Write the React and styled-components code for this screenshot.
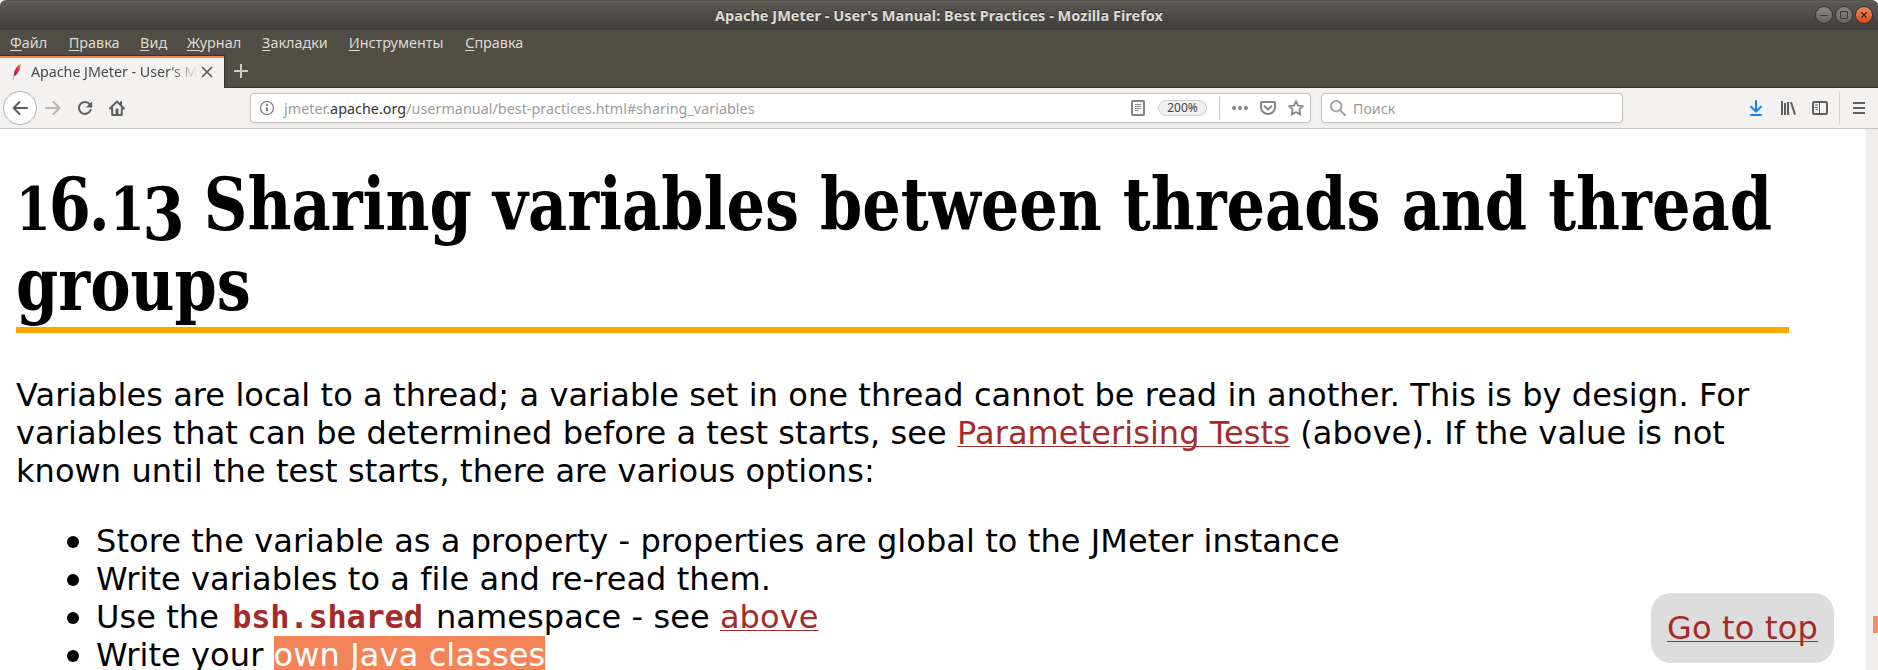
import React from "react";
import styled, { createGlobalStyle } from "styled-components";

const UI = `"Noto Sans", "Open Sans", sans-serif`;

const GlobalStyle = createGlobalStyle`
  body { margin: 0; background: #fff; overflow: hidden; }
  *, *::before, *::after { box-sizing: border-box; }
`;

const Window = styled.div`
  display: flex;
  flex-direction: column;
  width: 1878px;
  height: 670px;
  overflow: hidden;
  font-family: ${UI};
`;

const TitleBar = styled.header`
  position: relative;
  flex: none;
  display: flex;
  align-items: center;
  justify-content: center;
  height: 30px;
  padding-bottom: 2px;
  border-radius: 6px 6px 0 0;
  border-top: 1px solid #55534b;
  background: linear-gradient(#65635a 0, #5a5850 2px, #3d3c37 100%);
`;

const WindowTitle = styled.span`
  color: #dfdbd2;
  font-size: 14.5px;
  font-weight: 700;
  line-height: 20px;
  letter-spacing: 0.02px;
  text-shadow: 0 -1px 0 #2c2b28;
`;

const WindowButtons = styled.div`
  position: absolute;
  right: 5px;
  top: 5px;
  display: flex;
  gap: 2px;
`;

const WindowButton = styled.span`
  display: flex;
  width: 18px;
  height: 18px;
  border-radius: 50%;
  border: 1px solid #35342f;
  background: ${(p) =>
    p.$close ? "linear-gradient(#f58a63, #df4a16)" : "linear-gradient(#8a8880, #66645c)"};
`;

const MenuBar = styled.nav`
  flex: none;
  display: flex;
  gap: 20.8px;
  height: 25px;
  padding: 3px 0 0 10px;
  background: #504d45;
`;

const MenuItem = styled.span`
  width: ${(p) => p.$width}px;
  color: #dfdbd2;
  font-size: 14.4px;
  line-height: 20px;
  white-space: nowrap;

  &::first-letter {
    text-decoration: underline;
    text-decoration-thickness: 1px;
    text-underline-offset: 2px;
  }
`;

const TabStrip = styled.div`
  flex: none;
  display: flex;
  height: 33px;
  background: #504d45;
`;

const Tab = styled.div`
  display: flex;
  align-items: center;
  width: 225px;
  padding: 0 11px 0 11px;
  border-top: 1px solid #35332e;
  border-right: 1px solid #35332e;
  background: linear-gradient(#f38458 2px, #f4f2f1 2px);
`;

const TabTitle = styled.span`
  flex: none;
  width: 166px;
  margin: 0 3px 0 8px;
  overflow: hidden;
  white-space: nowrap;
  color: #4a4a4a;
  font-size: 14.3px;
  line-height: 22px;
  letter-spacing: -0.05px;
  mask-image: linear-gradient(to right, #000 138px, transparent 166px);
`;

const StripRest = styled.div`
  flex: 1;
  padding: 9px 0 0 9px;
  border-bottom: 1px solid #35332e;
`;

const Toolbar = styled.div`
  flex: none;
  display: flex;
  align-items: center;
  height: 41px;
  padding: 0 13px 0 3px;
  border-bottom: 1px solid #c8c5c3;
  background: #f4f2f1;
`;

const BackButton = styled.span`
  display: flex;
  align-items: center;
  justify-content: center;
  width: 34px;
  height: 34px;
  border: 1px solid #b0aeac;
  border-radius: 50%;
  background: #fff;
`;

const NavIcons = styled.div`
  display: flex;
  gap: 16px;
  width: 213px;
  padding-left: 8px;
`;

const Field = styled.div`
  display: flex;
  align-items: center;
  width: ${(p) => p.$width}px;
  height: 30px;
  margin-right: ${(p) => p.$after}px;
  padding: 0 6px 0 ${(p) => p.$inset}px;
  border: 1px solid #c6c2be;
  border-radius: 4px;
  background: #fff;
  box-shadow: 0 1px 3px rgba(0, 0, 0, 0.06);
`;

const Address = styled.span`
  flex: 1;
  margin-left: 9px;
  color: #9c9c9c;
  font-size: 14.3px;
  line-height: 20px;
  letter-spacing: 0.045px;
  padding-top: 1px;
  white-space: nowrap;
`;

const Host = styled.span`
  color: #333;
`;

const ZoomPill = styled.span`
  width: 49px;
  height: 16px;
  margin: 0 12px;
  border: 1px solid #cfcfcf;
  border-radius: 8px;
  background: #f0f0f0;
  color: #444;
  font-size: 12px;
  line-height: 14px;
  text-align: center;
`;

const Divider = styled.span`
  width: 1px;
  height: ${(p) => p.$height}px;
  margin: 0 ${(p) => p.$after}px 0 ${(p) => p.$before}px;
  background: ${(p) => p.$color};
`;

const FieldIcons = styled.span`
  display: flex;
  gap: 12px;
`;

const Placeholder = styled.span`
  margin-left: 7px;
  padding-top: 1px;
  color: #999;
  font-size: 14.2px;
  line-height: 20px;
`;

const ToolIcons = styled.div`
  display: flex;
  gap: 16px;
  margin-left: auto;
`;

const Icon = styled.svg`
  flex: none;
  display: block;
  fill: none;
  stroke: ${(p) => p.$color || "#5f5f5f"};
  stroke-width: ${(p) => p.$weight || 2};
  stroke-linecap: ${(p) => p.$cap || "round"};
  stroke-linejoin: round;
`;

const Viewport = styled.div`
  position: relative;
  flex: 1;
  display: flex;
  min-height: 0;
  background: #fff;
`;

const Page = styled.main`
  flex: 1;
  min-width: 0;
  padding: 35px 77px 0 16px;
  color: #000;
  font-family: "DejaVu Sans", sans-serif;
  font-size: 32px;
  line-height: 38px;
  letter-spacing: 0.075px;
`;

const Heading = styled.h1`
  height: 169px;
  margin: 0 0 43px;
  border-bottom: 6px solid #ffa500;
  font-family: "DejaVu Serif Condensed", "DejaVu Serif", serif;
  font-stretch: condensed;
  font-size: 73px;
  font-weight: 700;
  line-height: 80px;
  letter-spacing: 0;
`;

const HeadingLine = styled.span`
  display: block;
  width: max-content;
  white-space: nowrap;
  transform: scaleX(0.921);
  transform-origin: left;
`;

const Digit = styled.span`
  font-size: ${(p) => (p.$short ? 60 : 73)}px;
  line-height: 0;
  letter-spacing: -2.1px;
  vertical-align: ${(p) => (p.$drop ? -10 : 0)}px;
`;

const Paragraph = styled.p`
  margin: 0;
  white-space: nowrap;
`;

const Link = styled.a`
  color: #a52a2a;
  text-decoration: underline;
  text-decoration-thickness: 1px;
  text-underline-offset: 2px;
  text-decoration-skip-ink: none;
`;

const List = styled.ul`
  margin: 32px 0 0;
  padding: 0;
  list-style: none;
`;

const Item = styled.li`
  display: flex;
  align-items: center;
  height: 38px;
  white-space: pre;

  &::before {
    content: "";
    width: 12px;
    height: 12px;
    margin: 2px 17px 0 51px;
    border-radius: 50%;
    background: #000;
  }
`;

const Code = styled.code`
  margin: 0 3px;
  color: #a52a2a;
  font-family: "DejaVu Sans Mono", monospace;
  font-size: 32px;
  font-weight: 700;
  letter-spacing: -0.22px;
`;

const Selected = styled.span`
  background: #f38458;
  color: #fff;
  letter-spacing: 0.12px;
`;

const GoTop = styled.div`
  position: absolute;
  right: 44px;
  top: 464px;
  display: flex;
  align-items: center;
  justify-content: center;
  width: 183px;
  height: 70px;
  border-radius: 20px;
  background: #ddd;
  font-family: "DejaVu Sans", sans-serif;
  font-size: 32px;
  line-height: 38px;
  letter-spacing: 0.2px;
`;

const Scrollbar = styled.div`
  width: 12px;
  padding: 487px 0 0 7px;
  background: #f1efee;
`;

const ScrollMark = styled.div`
  height: 17px;
  background: #f58c64;
`;

const MENU = [
  ["Файл", 38],
  ["Правка", 50.5],
  ["Вид", 26],
  ["Журнал", 54.4],
  ["Закладки", 65.9],
  ["Инструменты", 95.6],
  ["Справка", 57],
];

const S16 = { width: 16, height: 16, viewBox: "0 0 16 16" };
const FIELD_GREY = "#858585";

export default function App() {
  return (
    <Window>
      <GlobalStyle />
      <TitleBar>
        <WindowTitle>Apache JMeter - User's Manual: Best Practices - Mozilla Firefox</WindowTitle>
        <WindowButtons>
          <WindowButton>
            <Icon {...S16} $color="#3a3934" $weight={1} $cap="butt"><path d="M4 8.5h8" /></Icon>
          </WindowButton>
          <WindowButton>
            <Icon {...S16} $color="#3a3934" $weight={1} $cap="butt"><path d="M4.5 4.5h7v7h-7z" /></Icon>
          </WindowButton>
          <WindowButton $close>
            <Icon {...S16} $color="#3a2a20" $weight={1.3} $cap="butt"><path d="M5.3 5.3l5.4 5.4M10.7 5.3l-5.4 5.4" /></Icon>
          </WindowButton>
        </WindowButtons>
      </TitleBar>

      <MenuBar>
        {MENU.map(([label, width]) => (
          <MenuItem key={label} $width={width}>{label}</MenuItem>
        ))}
      </MenuBar>

      <TabStrip>
        <Tab>
          <Icon width="12" height="16" viewBox="0 0 12 16">
            <defs>
              <linearGradient id="feather" x1="1" y1="0" x2="0" y2="1">
                <stop offset="0" stopColor="#f9a11b" />
                <stop offset="0.4" stopColor="#e0342f" />
                <stop offset="0.7" stopColor="#b5215c" />
                <stop offset="1" stopColor="#7b2a7e" />
              </linearGradient>
            </defs>
            <path d="M9.8 0C7 .8 4.200 4.500 3.200 8.500L2.600 12.600C5.500 11.500 8 7.500 9 4.200z" fill="url(#feather)" stroke="none" />
            <path d="M3 11.500L2 15.500" stroke="#c9a5c9" strokeWidth="1" />
          </Icon>
          <TabTitle>Apache JMeter - User's Manual</TabTitle>
          <Icon width="14" height="14" viewBox="0 0 14 14" $color="#5a5a5a" $weight={1.7}><path d="M2.500 2.500l9 9M11.500 2.500l-9 9" /></Icon>
        </Tab>
        <StripRest>
          <Icon width="14" height="14" viewBox="0 0 14 14" $color="#cfccc4" $cap="butt"><path d="M7 0v14M0 7h14" /></Icon>
        </StripRest>
      </TabStrip>

      <Toolbar>
        <BackButton>
          <Icon {...S16}><path d="M15 8H1.500M7.500 2L1.500 8l6 6" /></Icon>
        </BackButton>
        <NavIcons>
          <Icon {...S16} $color="#b9b8b7"><path d="M1 8h13.500M8.500 2l6 6-6 6" /></Icon>
          <Icon {...S16}>
            <path d="M12.800 4.300A6 6 0 1 0 13.600 10" />
            <path d="M15.200 1.200v6.300h-6.300z" fill="#5f5f5f" stroke="none" />
          </Icon>
          <Icon {...S16}>
            <path d="M1 8.500L8 1.500l7 7M3.200 8v7h9.600V8" />
            <path d="M12 2v3" />
            <path d="M6.500 15V9.500a1 1 0 0 1 1-1h1a1 1 0 0 1 1 1V15z" fill="#5f5f5f" stroke="none" />
          </Icon>
        </NavIcons>

        <Field $width={1061} $inset={8} $after={10}>
          <Icon {...S16} $color="#777" $weight={1.200}>
            <circle cx="8" cy="8" r="6.500" />
            <path d="M8 7.300v4" strokeWidth="1.800" strokeLinecap="butt" />
            <circle cx="8" cy="5" r="1.100" fill="#777" stroke="none" />
          </Icon>
          <Address>jmeter.<Host>apache.org</Host>/usermanual/best-practices.html#sharing_variables</Address>
          <Icon {...S16} $color={FIELD_GREY}>
            <rect x="2" y="1" width="12" height="14" rx="1" />
            <path d="M5 4.500h6M5 6.500h6M5 8.500h6M5 10.500h3.500" strokeWidth="1" strokeLinecap="butt" />
          </Icon>
          <ZoomPill>200%</ZoomPill>
          <Divider $height={22} $before={0} $after={12} $color="#c4c2c0" />
          <FieldIcons>
            <Icon {...S16}>
              <g fill={FIELD_GREY} stroke="none">
                <circle cx="2" cy="8" r="2" /><circle cx="8" cy="8" r="2" /><circle cx="14" cy="8" r="2" />
              </g>
            </Icon>
            <Icon {...S16} $color={FIELD_GREY}>
              <path d="M2 2h12a1 1 0 0 1 1 1v4.500a7 6.500 0 0 1-14 0V3a1 1 0 0 1 1-1z" />
              <path d="M4.700 6.300L8 9.400l3.300-3.100" />
            </Icon>
            <Icon {...S16} $color={FIELD_GREY} $weight={1.800}>
              <path d="M8 1.200l2 4.400 4.900.5-3.600 3.300 1 5.200L8 12l-4.300 2.600 1-5.200L1.100 6.100 6 5.600z" />
            </Icon>
          </FieldIcons>
        </Field>

        <Field $width={302} $inset={8} $after={0}>
          <Icon {...S16} $color="#a3a3a3"><circle cx="6.200" cy="6.200" r="5.200" /><path d="M10.200 10.200l5 5" /></Icon>
          <Placeholder>Поиск</Placeholder>
        </Field>

        <ToolIcons>
          <Icon {...S16} $color="#0a84ff"><path d="M8 1v10M3 6.800l5 4.800 5-4.800M3 15h10" /></Icon>
          <Icon {...S16} $cap="butt"><path d="M2 1v14M5 3v12M8 2v13M11 2l4 12.600" /></Icon>
          <Icon {...S16}>
            <rect x="1" y="2" width="14" height="12" rx="1.500" />
            <path d="M7.500 2v12M3 5h3M3 7.500h3M4 9.500h2" strokeWidth="1" strokeLinecap="butt" />
          </Icon>
        </ToolIcons>
        <Divider $height={34} $before={11} $after={13} $color="#d8d6d4" />
        <Icon width="12" height="16" viewBox="0 0 12 16" $cap="butt"><path d="M0 3h12M0 8h12M0 13h12" /></Icon>
      </Toolbar>

      <Viewport>
        <Page>
          <Heading>
            <HeadingLine>
              <Digit $short>1</Digit><Digit>6</Digit>.<Digit $short>1</Digit><Digit $drop>3</Digit> Sharing variables between threads and thread
            </HeadingLine>
            <HeadingLine>groups</HeadingLine>
          </Heading>
          <Paragraph>
            Variables are local to a thread; a variable set in one thread cannot be read in another. This is by design. For<br />
            variables that can be determined before a test starts, see <Link>Parameterising Tests</Link> (above). If the value is not<br />
            known until the test starts, there are various options:
          </Paragraph>
          <List>
            <Item><span>Store the variable as a property - properties are global to the JMeter instance</span></Item>
            <Item><span>Write variables to a file and re-read them.</span></Item>
            <Item><span>Use the <Code>bsh.shared</Code> namespace - see <Link>above</Link></span></Item>
            <Item><span>Write your <Selected>own Java classes</Selected></span></Item>
          </List>
        </Page>
        <GoTop><Link>Go to top</Link></GoTop>
        <Scrollbar><ScrollMark /></Scrollbar>
      </Viewport>
    </Window>
  );
}
